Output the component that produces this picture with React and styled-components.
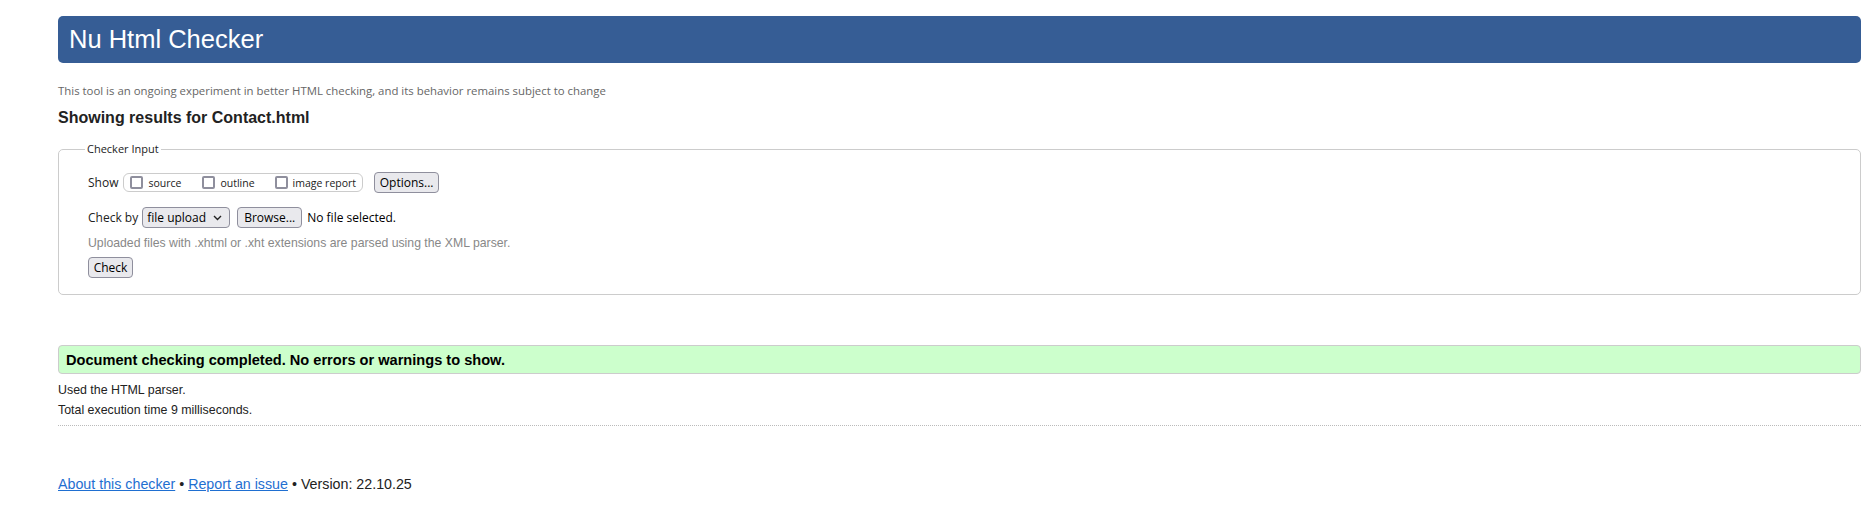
import React from "react";
import styled, { createGlobalStyle } from "styled-components";

const Global = createGlobalStyle`
  html, body { margin: 0; padding: 0; background: #fff; }
  body { font-family: "Liberation Sans", Arial, sans-serif; color: #222; }
`;

const Page = styled.div`
  padding: 16px 1px 0 58px;
  display: flex;
  flex-direction: column;
`;

const Header = styled.h1`
  margin: 0;
  height: 47px;
  box-sizing: border-box;
  display: flex;
  align-items: center;
  padding-left: 11px;
  background: #365d95;
  color: #fff;
  border-radius: 5px;
  font-family: "Liberation Sans", Arial, sans-serif;
  font-weight: normal;
  font-size: 25.5px;
`;

const Intro = styled.p`
  margin: 21px 0 0;
  font-family: "Open Sans", "Noto Sans", sans-serif;
  font-size: 11.4px;
  line-height: 14px;
  color: #666;
`;

const Heading = styled.h2`
  margin: 10px 0 0;
  font-size: 16px;
  line-height: 19px;
  font-weight: bold;
  color: #222;
`;

const Fieldset = styled.fieldset`
  margin: 15px 0 0;
  padding: 16px 28px 16px 29px;
  border: 1px solid #ccc;
  border-radius: 5px;
  display: flex;
  flex-direction: column;
  font-family: "Open Sans", "Noto Sans", sans-serif;
  font-size: 12px;
  color: #222;
`;

const Legend = styled.legend`
  font-size: 11px;
  line-height: 14px;
  padding: 0 2px;
  margin-left: -3px;
  color: #222;
`;

const Row = styled.div`
  display: flex;
  align-items: center;
  height: 21px;
  margin-top: ${(p) => p.$mt || 0}px;
`;

const Label = styled.span`
  font-size: 12px;
  line-height: 16px;
  margin-right: ${(p) => p.$mr || 0}px;
`;

const Group = styled.span`
  display: flex;
  align-items: center;
  height: 19px;
  box-sizing: border-box;
  border: 1px solid #ccc;
  border-radius: 6px;
  padding: 0 6px 0 6px;
  margin-right: 11px;
`;

const Option = styled.label`
  display: flex;
  align-items: center;
  gap: 5px;
  font-size: 10.5px;
  margin-right: ${(p) => p.$mr || 0}px;
  color: #222;
`;

const Box = styled.span`
  display: inline-block;
  width: 13px;
  height: 13px;
  box-sizing: border-box;
  border: 2px solid #8f8f9d;
  border-radius: 2px;
  background: #fff;
`;

const Button = styled.button`
  height: 21px;
  box-sizing: border-box;
  display: inline-flex;
  align-items: center;
  justify-content: ${(p) => (p.$select ? "space-between" : "center")};
  white-space: nowrap;
  padding: ${(p) => (p.$select ? "0 7px 0 4px" : "0 4px")};
  width: ${(p) => p.$w}px;
  background: #e9e9ed;
  border: 1px solid #8f8f9d;
  border-radius: 4px;
  font-family: "Open Sans", "Noto Sans", sans-serif;
  font-size: 12px;
  color: #000;
  margin-right: ${(p) => p.$mr || 0}px;
  cursor: default;
`;

const FileText = styled.span`
  font-size: 12px;
  color: #000;
`;

const Hint = styled.p`
  margin: 8px 0 0;
  font-family: "Liberation Sans", Arial, sans-serif;
  font-size: 12.25px;
  line-height: 14px;
  color: #888;
`;

const Success = styled.div`
  margin-top: 50px;
  height: 29px;
  box-sizing: border-box;
  display: flex;
  align-items: center;
  padding-left: 7px;
  background: #ccffcc;
  border: 1px solid #ccc;
  border-radius: 4px;
  font-size: 14.6px;
  font-weight: bold;
  color: #000;
`;

const Details = styled.div`
  margin-top: 6px;
  font-size: 12.4px;
  line-height: 20px;
  color: #222;
`;

const Rule = styled.hr`
  margin: 5px 0 0;
  border: 0;
  border-top: 1px dotted #bbb;
  height: 0;
`;

const Footer = styled.p`
  margin: 50px 0 0;
  font-size: 14.25px;
  line-height: 16px;
  color: #222;
`;

const Link = styled.a`
  color: #1f6fd1;
  text-decoration: underline;
`;

const Chevron = () => (
  <svg width="9" height="6" viewBox="0 0 9 6" fill="none">
    <path d="M1 1 L4.5 4.5 L8 1" stroke="#222" strokeWidth="1.4" />
  </svg>
);

export default function App() {
  return (
    <>
      <Global />
      <Page>
        <Header>Nu Html Checker</Header>
        <Intro>
          This tool is an ongoing experiment in better HTML checking, and its behavior remains subject to change
        </Intro>
        <Heading>Showing results for Contact.html</Heading>
        <Fieldset>
          <Legend>Checker Input</Legend>
          <Row>
            <Label $mr={5}>Show</Label>
            <Group>
              <Option $mr={21}>
                <Box />
                source
              </Option>
              <Option $mr={20}>
                <Box />
                outline
              </Option>
              <Option>
                <Box />
                image report
              </Option>
            </Group>
            <Button $w={65}>Options...</Button>
          </Row>
          <Row $mt={14}>
            <Label $mr={4}>Check by</Label>
            <Button $select $w={88} $mr={7}>
              file upload
              <Chevron />
            </Button>
            <Button $w={65} $mr={5}>Browse...</Button>
            <FileText>No file selected.</FileText>
          </Row>
          <Hint>Uploaded files with .xhtml or .xht extensions are parsed using the XML parser.</Hint>
          <Row $mt={7}>
            <Button $w={45}>Check</Button>
          </Row>
        </Fieldset>
        <Success>Document checking completed. No errors or warnings to show.</Success>
        <Details>
          <div>Used the HTML parser.</div>
          <div>Total execution time 9 milliseconds.</div>
        </Details>
        <Rule />
        <Footer>
          <Link href="#">About this checker</Link> • <Link href="#">Report an issue</Link> • Version: 22.10.25
        </Footer>
      </Page>
    </>
  );
}
